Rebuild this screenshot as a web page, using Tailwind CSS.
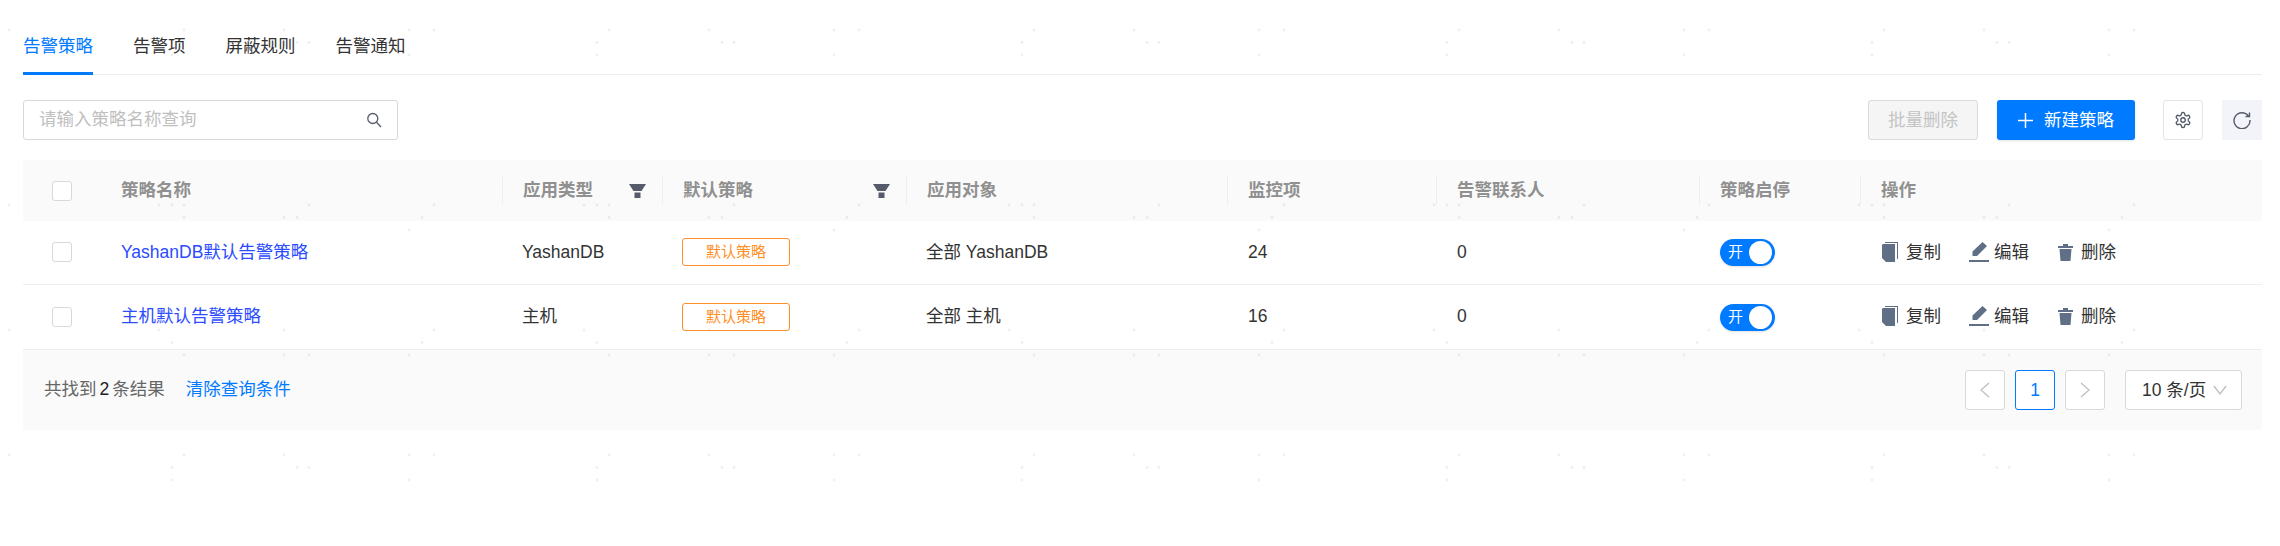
<!doctype html>
<html><head><meta charset="utf-8"><script src="https://cdn.jsdelivr.net/npm/@tailwindcss/browser@4"></script></head>
<body class="bg-white">
<div class="relative w-[2280px] h-[546px] overflow-hidden bg-white text-[17.5px] text-[#333] font-['Liberation_Sans','Noto_Sans_CJK_SC',sans-serif]">
<svg class="absolute inset-0" width="2280" height="546"><defs><pattern id="d" width="425" height="425" patternUnits="userSpaceOnUse" fill="#efefef">
<circle cx="9" cy="30" r="1.4"/><circle cx="184" cy="30" r="1.4"/><circle cx="284" cy="30" r="1.4"/><circle cx="409" cy="30" r="1.4"/>
<circle cx="172" cy="42.5" r="1.4"/><circle cx="297" cy="42.5" r="1.4"/><circle cx="309" cy="42.5" r="1.4"/>
<circle cx="172" cy="55" r="1.4"/><circle cx="409" cy="55" r="1.4"/>
<circle cx="9" cy="205" r="1.4"/><circle cx="159" cy="205" r="1.4"/><circle cx="172" cy="205" r="1.4"/><circle cx="184" cy="205" r="1.4"/><circle cx="309" cy="205" r="1.4"/>
<circle cx="184" cy="217.5" r="1.4"/><circle cx="284" cy="217.5" r="1.4"/><circle cx="297" cy="217.5" r="1.4"/><circle cx="422" cy="217.5" r="1.4"/>
<circle cx="409" cy="230" r="1.4"/>
<circle cx="9" cy="330" r="1.4"/><circle cx="159" cy="330" r="1.4"/><circle cx="284" cy="330" r="1.4"/>
<circle cx="172" cy="342.5" r="1.4"/><circle cx="422" cy="342.5" r="1.4"/>
<circle cx="184" cy="355" r="1.4"/><circle cx="284" cy="355" r="1.4"/><circle cx="309" cy="355" r="1.4"/><circle cx="409" cy="355" r="1.4"/>
</pattern></defs><rect width="2280" height="546" fill="url(#d)"/></svg>
<div class="relative pl-[23px] pr-[18px]">
 <div class="h-[75px] border-b border-[#eee] flex items-start gap-10 pt-[32px] leading-7">
  <div class="relative h-[43px] w-[70px] text-[#007aff]">告警策略<span class="absolute left-0 right-0 bottom-0 h-[3px] bg-[#007aff]"></span></div>
  <div>告警项</div><div>屏蔽规则</div><div>告警通知</div>
 </div>
 <div class="h-[85px] flex items-start pt-[25px]">
  <div class="w-[375px] h-10 bg-white border border-[#d9d9d9] rounded-[3px] flex items-center pl-[15px] pr-[15px] justify-between text-[#bfbfbf]"><span class="-mt-[2px]">请输入策略名称查询</span>
   <svg width="16" height="16" viewBox="0 0 16 16" fill="none" stroke="#555b6b" stroke-width="1.3"><circle cx="6.8" cy="6.5" r="5"/><path d="M10.5 10.3 15 15"/></svg></div>
  <div class="ml-auto w-[110px] h-10 bg-[#f5f5f5] border border-[#d9d9d9] rounded-[3px] flex items-center justify-center text-[#c4c4c4]">批量删除</div>
  <div class="ml-[19px] w-[138px] h-10 bg-[#007aff] rounded-[3px] shadow-sm flex items-center justify-center gap-[11px] text-white">
   <svg width="15" height="15" viewBox="0 0 15 15" stroke="#fff" stroke-width="1.5"><path d="M7.5 0v15M0 7.5h15"/></svg><span>新建策略</span></div>
  <div class="ml-7 w-10 h-10 bg-white border border-[#e4e4e4] rounded-[3px] flex items-center justify-center">
   <svg width="18" height="18" viewBox="0 0 24 24" fill="none" stroke="#555b6b" stroke-width="1.800" stroke-linejoin="round"><path d="M12.220 2h-.44a2 2 0 0 0-2 2v.18a2 2 0 0 1-1 1.730l-.43.25a2 2 0 0 1-2 0l-.15-.08a2 2 0 0 0-2.730.73l-.22.38a2 2 0 0 0 .73 2.730l.15.1a2 2 0 0 1 1 1.720v.51a2 2 0 0 1-1 1.740l-.15.09a2 2 0 0 0-.73 2.730l.22.38a2 2 0 0 0 2.730.73l.15-.08a2 2 0 0 1 2 0l.43.25a2 2 0 0 1 1 1.730V20a2 2 0 0 0 2 2h.44a2 2 0 0 0 2-2v-.18a2 2 0 0 1 1-1.730l.43-.25a2 2 0 0 1 2 0l.15.08a2 2 0 0 0 2.730-.73l.22-.39a2 2 0 0 0-.73-2.730l-.15-.08a2 2 0 0 1-1-1.740v-.5a2 2 0 0 1 1-1.740l.15-.09a2 2 0 0 0 .73-2.730l-.22-.38a2 2 0 0 0-2.730-.73l-.15.08a2 2 0 0 1-2 0l-.43-.25a2 2 0 0 1-1-1.730V4a2 2 0 0 0-2-2z"/><circle cx="12" cy="12" r="3"/></svg></div>
  <div class="ml-[19px] w-10 h-10 bg-[#f2f4f9] flex items-center justify-center">
   <svg width="18" height="18" viewBox="0 0 18 18" fill="none" stroke="#555b6b" stroke-width="1.400"><path d="M15.500 5A8 8 0 1 0 17 9"/><path d="M16.500 1.500V5.500H12.500"/></svg></div>
 </div>
 <div class="grid grid-cols-[78px_401px_160px_244px_321px_209px_263px_161px_1fr] h-[61px] bg-black/[0.02] items-center text-[#909090] font-semibold">
  <div class="pl-[29px]"><span class="block w-5 h-5 bg-white border border-[#d9d9d9] rounded-[3px]"></span></div>
  <div class="pl-5">策略名称</div>
  <div class="pl-5 h-[27px] border-l border-[#eee] flex items-center justify-between pr-[16px]">应用类型<svg width="17" height="14" viewBox="0 0 17 14" fill="#555b6b"><path d="M0 0h17l-4.500 7h-8zM5.500 8.500h6V14h-6z"/></svg></div>
  <div class="pl-5 h-[27px] border-l border-[#eee] flex items-center justify-between pr-[16px] mr-0">默认策略<svg width="17" height="14" viewBox="0 0 17 14" fill="#555b6b"><path d="M0 0h17l-4.500 7h-8zM5.500 8.500h6V14h-6z"/></svg></div>
  <div class="pl-5 h-[27px] border-l border-[#eee] flex items-center">应用对象</div>
  <div class="pl-5 h-[27px] border-l border-[#eee] flex items-center">监控项</div>
  <div class="pl-5 h-[27px] border-l border-[#eee] flex items-center">告警联系人</div>
  <div class="pl-5 h-[27px] border-l border-[#eee] flex items-center">策略启停</div>
  <div class="pl-5 h-[27px] border-l border-[#eee] flex items-center">操作</div>
 </div>
 <div class="grid grid-cols-[78px_401px_160px_244px_321px_209px_263px_161px_1fr] h-16 pb-px border-b border-[#eee] items-center">
  <div class="pl-[29px]"><span class="block w-5 h-5 bg-white border border-[#d9d9d9] rounded-[3px]"></span></div>
  <div class="pl-5 text-[#2b4bff]">YashanDB默认告警策略</div>
  <div class="pl-5">YashanDB</div>
  <div class="pl-5"><span class="flex w-[108px] h-7 items-center justify-center border border-[#ff8f26] rounded-[3px] text-[15px] text-[#ff8f26]">默认策略</span></div>
  <div class="pl-5">全部 YashanDB</div>
  <div class="pl-[21px]">24</div>
  <div class="pl-[21px]">0</div>
  <div class="pl-[21px]"><span class="relative flex w-[55px] h-[27px] rounded-full bg-[#007aff] shadow-sm items-center pl-2 text-[15px] text-white">开<span class="absolute right-[3px] top-[2px] w-[23px] h-[23px] rounded-full bg-white"></span></span></div>
  <div class="pl-[22px] flex items-center">
   <svg width="16" height="20" viewBox="0 0 16 20" fill="#5f6f86"><path d="M3 0h13v17h-1V1H3zM1 2h12v18H4l-4-4V3z"/></svg><span class="ml-2 w-[35px]">复制</span>
   <svg class="ml-7" width="20" height="20" viewBox="0 0 20 20" fill="#5f6f86"><path d="M13.500 0 18 4 8 14H3.500V9.500zM0 18h20v2H0z"/></svg><span class="ml-[5px] w-[35px]">编辑</span>
   <svg class="ml-[29px]" width="15" height="17" viewBox="0 0 15 17" fill="#5f6f86"><path d="M5 0h5v2h5v2H0V2h5zM1.500 5h12L12.500 17h-10z"/></svg><span class="ml-2 w-[35px]">删除</span>
  </div>
 </div>
 <div class="grid grid-cols-[78px_401px_160px_244px_321px_209px_263px_161px_1fr] h-[65px] border-b border-[#eee] items-center">
  <div class="pl-[29px]"><span class="block w-5 h-5 bg-white border border-[#d9d9d9] rounded-[3px]"></span></div>
  <div class="pl-5 pb-[2px] text-[#2b4bff]">主机默认告警策略</div>
  <div class="pl-5 pb-[2px]">主机</div>
  <div class="pl-5"><span class="flex w-[108px] h-7 items-center justify-center border border-[#ff8f26] rounded-[3px] text-[15px] text-[#ff8f26]">默认策略</span></div>
  <div class="pl-5 pb-[2px]">全部 主机</div>
  <div class="pl-[21px] pb-[2px]">16</div>
  <div class="pl-[21px] pb-[2px]">0</div>
  <div class="pl-[21px]"><span class="relative flex w-[55px] h-[27px] rounded-full bg-[#007aff] shadow-sm items-center pl-2 text-[15px] text-white">开<span class="absolute right-[3px] top-[2px] w-[23px] h-[23px] rounded-full bg-white"></span></span></div>
  <div class="pl-[22px] pb-[2px] flex items-center">
   <svg width="16" height="20" viewBox="0 0 16 20" fill="#5f6f86"><path d="M3 0h13v17h-1V1H3zM1 2h12v18H4l-4-4V3z"/></svg><span class="ml-2 w-[35px]">复制</span>
   <svg class="ml-7" width="20" height="20" viewBox="0 0 20 20" fill="#5f6f86"><path d="M13.500 0 18 4 8 14H3.500V9.500zM0 18h20v2H0z"/></svg><span class="ml-[5px] w-[35px]">编辑</span>
   <svg class="ml-[29px]" width="15" height="17" viewBox="0 0 15 17" fill="#5f6f86"><path d="M5 0h5v2h5v2H0V2h5zM1.500 5h12L12.500 17h-10z"/></svg><span class="ml-2 w-[35px]">删除</span>
  </div>
 </div>
 <div class="h-20 bg-black/[0.02] flex items-center pl-[21px] pr-5">
  <span class="pb-[2px] text-[#666]">共找到<span class="mx-[3px] text-[#222]">2</span>条结果</span><span class="ml-[21px] pb-[2px] text-[#007aff]">清除查询条件</span>
  <div class="ml-auto w-10 h-10 bg-white border border-[#d9d9d9] rounded-[3px] flex items-center justify-center"><svg width="10" height="16" viewBox="0 0 10 16" fill="none" stroke="#bfbfbf" stroke-width="1.300"><path d="M9 1 1 8l8 7"/></svg></div>
  <div class="ml-[10px] w-10 h-10 bg-white border border-[#007aff] rounded-[3px] flex items-center justify-center text-[#007aff]">1</div>
  <div class="ml-[10px] w-10 h-10 bg-white border border-[#d9d9d9] rounded-[3px] flex items-center justify-center"><svg width="10" height="16" viewBox="0 0 10 16" fill="none" stroke="#bfbfbf" stroke-width="1.300"><path d="m1 1 8 7-8 7"/></svg></div>
  <div class="ml-5 w-[117px] h-10 bg-white border border-[#d9d9d9] rounded-[3px] flex items-center pl-4 justify-between pr-[14px] text-[#333]"><span>10 条/页</span><svg width="14" height="10" viewBox="0 0 14 10" fill="none" stroke="#bfbfbf" stroke-width="1.300"><path d="m1 1 6 8 6-8"/></svg></div>
 </div>
</div>
</div>
</body></html>
